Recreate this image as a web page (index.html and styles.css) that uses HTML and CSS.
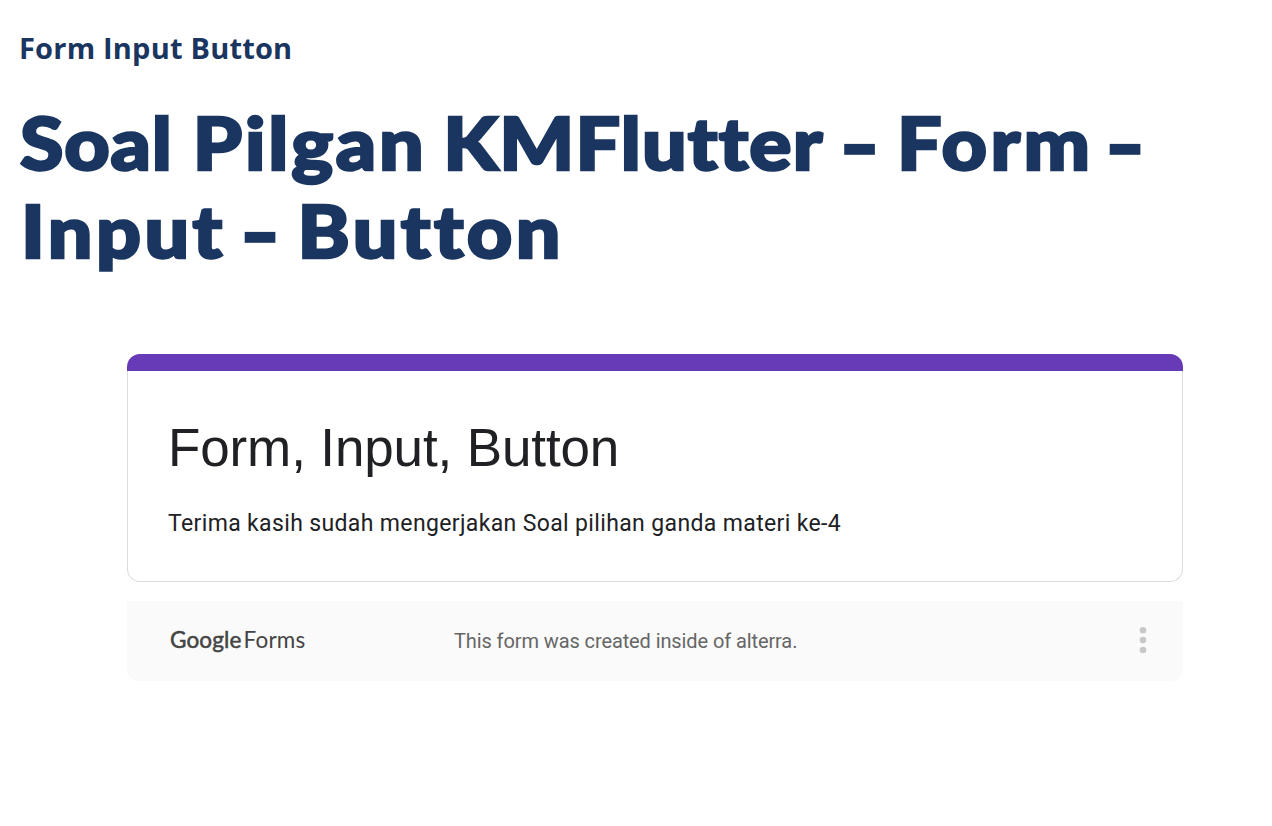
FILE: index.html
```html
<!DOCTYPE html>
<html lang="id">
<head>
<meta charset="utf-8">
<title>Form Input Button</title>
<link rel="stylesheet" href="styles.css">
</head>
<body>
<main class="page">
  <p class="module-name">Form Input Button</p>
  <h1 class="title">
    <span class="title-line title-line-first"><span class="barely-spaced">Soal</span> <span class="spaced">Pilgan</span> <span class="slightly-spaced">KMFlutter</span> <span class="dash">–</span> <span class="wide-spaced">Form</span> <span class="dash">–</span></span>
    <span class="title-line title-line-second"><span class="wide-spaced">Input</span> <span class="dash">–</span> <span class="wide-spaced">Button</span></span>
  </h1>
  <section class="embed">
    <div class="card">
      <div class="card-bar"></div>
      <div class="card-body">
        <h2 class="card-title">Form, Input, Button</h2>
        <p class="card-text">Terima kasih sudah mengerjakan Soal pilihan ganda materi ke-4</p>
      </div>
    </div>
    <footer class="form-footer">
      <div class="brand"><span class="brand-google">Google</span><span class="brand-forms">Forms</span></div>
      <p class="origin">This form was created inside of alterra.</p>
      <svg class="menu" width="8" height="28" viewBox="0 0 8 28"><circle cx="4" cy="4.2" r="3.3"/><circle cx="4" cy="14.1" r="3.3"/><circle cx="4" cy="24" r="3.3"/></svg>
    </footer>
  </section>
</main>
</body>
</html>
```

FILE: styles.css
```css
* { box-sizing: border-box; }
body { margin: 0; background: #fff; }
h1, h2, p { margin: 0; font-weight: 400; }
.page { height: 826px; overflow: hidden; padding: 28px 0 0 20px; color: #1a3660; }
.module-name { margin-left: -1px; font: 700 29px/40px "Open Sans", sans-serif; letter-spacing: .2px; white-space: nowrap; }
.title { margin-top: 30px; font: 900 73px/88px Lato, sans-serif; font-variant-ligatures: none; -webkit-text-stroke: 2.5px #1a3660; }
.title-line { display: grid; width: max-content; height: 88px; align-items: baseline; white-space: nowrap; transform: scaleX(1.08); transform-origin: left center; }
.title-line-first { grid-template-columns: 160px 232px 369px 51px 195px 40px; }
.title-line-second { padding-left: 1px; grid-template-columns: 205px 51px 260px; }
.barely-spaced { letter-spacing: .8px; }
.slightly-spaced { letter-spacing: 1.1px; }
.spaced { letter-spacing: 2.6px; }
.wide-spaced { letter-spacing: 3.2px; }
.dash { font-size: 56px; line-height: 94px; align-self: start; -webkit-text-stroke-width: 5.6px; }
.embed { width: 1056px; margin: 80px 0 0 107px; color: #202124; }
.card { height: 228px; }
.card-bar { height: 17px; background: #673ab7; border-radius: 13px 13px 0 0; }
.card-body { height: 211px; padding: 45px 40px 0; border: 1px solid #dadce0; border-top: 0; border-radius: 0 0 13px 13px; }
.card-title { font: 400 53px/64px "Liberation Sans", sans-serif; letter-spacing: -.13px; white-space: nowrap; }
.card-text { margin-top: 28px; font: 400 23px/32px Roboto, sans-serif; letter-spacing: .36px; white-space: nowrap; }
.form-footer { display: flex; align-items: center; height: 80px; margin-top: 19px; padding: 0 36px 0 43px; background: #fafafa; border-radius: 0 0 12px 12px; }
.brand { display: flex; gap: 2px; width: 284px; padding-bottom: 3px; font: 22.5px/30px Lato, sans-serif; color: #444; white-space: nowrap; }
.brand-google { -webkit-text-stroke: .5px #444; letter-spacing: .15px; }
.brand-forms { letter-spacing: .2px; }
.origin { padding-bottom: 1px; font: 20px/28px Roboto, sans-serif; letter-spacing: -.1px; color: #666; white-space: nowrap; }
.menu { margin: -2px 0 0 auto; fill: #c8c8c8; }
```
